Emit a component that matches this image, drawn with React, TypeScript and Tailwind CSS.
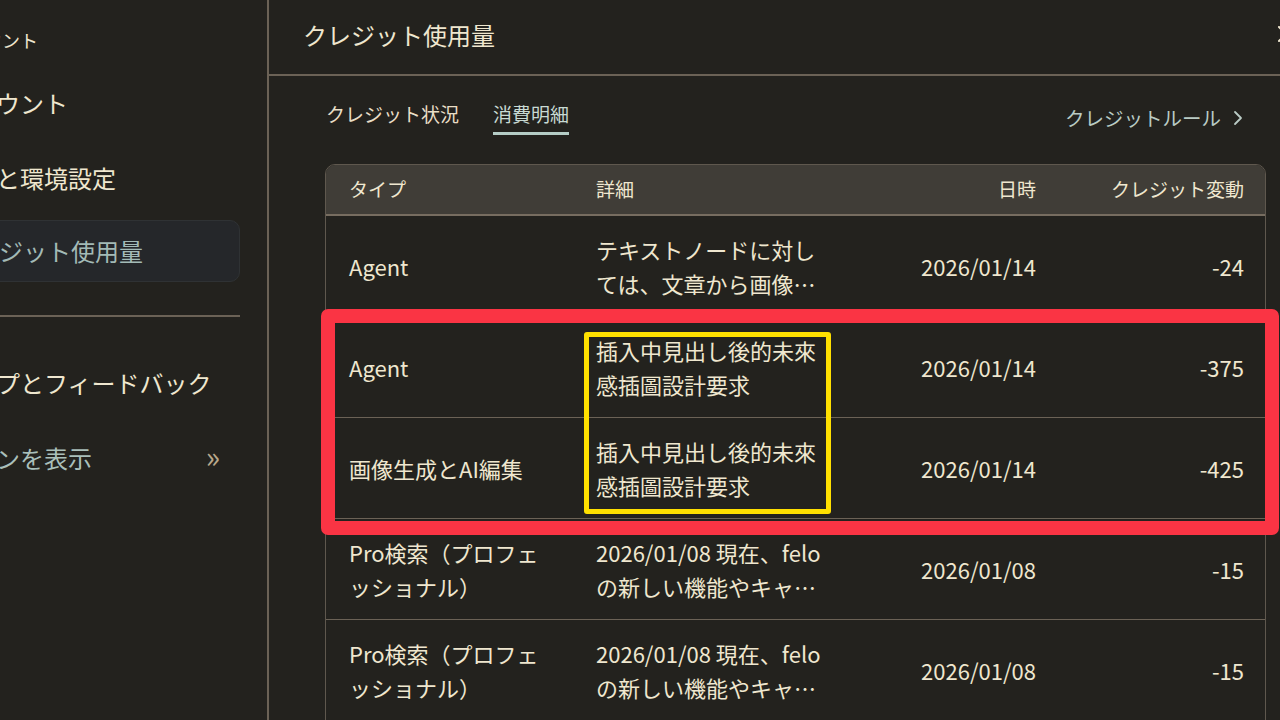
import React from "react";

const cream = "text-[#efe7cf]";

type Row = { type: string[]; detail: string[]; date: string; credit: string };

const rows: Row[] = [
  { type: ["Agent"], detail: ["テキストノードに対し", "ては、文章から画像…"], date: "2026/01/14", credit: "-24" },
  { type: ["Agent"], detail: ["插入中見出し後的未來", "感插圖設計要求"], date: "2026/01/14", credit: "-375" },
  { type: ["画像生成とAI編集"], detail: ["插入中見出し後的未來", "感插圖設計要求"], date: "2026/01/14", credit: "-425" },
  { type: ["Pro検索（プロフェ", "ッショナル）"], detail: ["2026/01/08 現在、felo", "の新しい機能やキャ…"], date: "2026/01/08", credit: "-15" },
  { type: ["Pro検索（プロフェ", "ッショナル）"], detail: ["2026/01/08 現在、felo", "の新しい機能やキャ…"], date: "2026/01/08", credit: "-15" },
  { type: ["Pro検索（プロフェ", "ッショナル）"], detail: ["2026/01/07 現在、felo", "の新しい機能やキャ…"], date: "2026/01/07", credit: "-15" },
];

function Sidebar() {
  return (
    <div className="w-[269px] shrink-0 border-r-2 border-[#6b6256] overflow-hidden h-full">
      <div className="ml-[-68px] w-[308px] flex flex-col">
        <div className={`mt-[24px] pl-[16px] text-[18px] leading-[32px] whitespace-nowrap ${cream}`}>アカウント</div>
        <div className={`mt-[27px] pl-[16px] text-[24px] leading-[40px] whitespace-nowrap ${cream}`}>アカウント</div>
        <div className={`mt-[35px] pl-[16px] text-[24px] leading-[40px] whitespace-nowrap ${cream}`}>言語と環境設定</div>
        <div className="mt-[22px] h-[62px] rounded-[10px] bg-[#25272a] border border-[#2f3234] flex items-center pl-[18px] text-[24px] leading-[40px] whitespace-nowrap text-[#a3bab6]">
          クレジット使用量
        </div>
        <div className="mt-[33px] h-[2px] bg-[#6b6256]" />
        <div className={`mt-[46px] pl-[16px] text-[24px] leading-[40px] whitespace-nowrap ${cream}`}>ヘルプとフィードバック</div>
        <div className="mt-[35px] pl-[16px] pr-[20px] flex items-center justify-between text-[24px] leading-[40px] whitespace-nowrap text-[#a9bfba]">
          <span>プランを表示</span>
          <span className="text-[30px] leading-[30px] mt-[-6px] text-[#b8a88b]">»</span>
        </div>
      </div>
    </div>
  );
}

function Table() {
  return (
    <div className="mt-[29px] rounded-[10px] border border-[#5f584e] overflow-hidden">
      <div className={`h-[51px] bg-[#403d37] border-b-2 border-[#776d60] grid grid-cols-[247px_250px_1fr_208px] items-center pl-[23px] pr-[21px] text-[19px] ${cream}`}>
        <div>タイプ</div>
        <div>詳細</div>
        <div className="text-right">日時</div>
        <div className="text-right">クレジット変動</div>
      </div>
      {rows.map((r, i) => (
        <div
          key={i}
          className={`h-[101px] border-b border-[#6b6256] grid grid-cols-[247px_247px_1fr_208px] items-center pl-[23px] pr-[21px] text-[22px] leading-[34px] ${cream}`}
        >
          <div className="whitespace-nowrap">
            {r.type.map((t, j) => (
              <div key={j}>{t}</div>
            ))}
          </div>
          <div className="whitespace-nowrap">
            {r.detail.map((t, j) => (
              <div key={j}>{t}</div>
            ))}
          </div>
          <div className="text-right">{r.date}</div>
          <div className="text-right">{r.credit}</div>
        </div>
      ))}
    </div>
  );
}

export default function App() {
  return (
    <div
      className="relative w-[1280px] h-[720px] overflow-hidden bg-[#23221e] flex"
      style={{ fontFamily: '"Noto Sans CJK JP", "Noto Sans", sans-serif' }}
    >
      <Sidebar />
      <div className="flex-1 flex flex-col min-w-0">
        <div className="h-[76px] shrink-0 border-b-2 border-[#6b6256] flex pl-[34px]">
          <div className={`self-center text-[24px] leading-[36px] whitespace-nowrap mt-[-4px] ${cream}`}>クレジット使用量</div>
          <div className="ml-auto mr-[-15px] mt-[26px] w-[18px] h-[16px]">
            <svg width="18" height="16" viewBox="0 0 18 16" fill="none" stroke="#efe7cf" strokeWidth="2" strokeLinecap="round">
              <path d="M2 1 L16 15" />
              <path d="M16 1 L2 15" />
            </svg>
          </div>
        </div>
        <div className="pl-[56px] pr-[14px]">
          <div className="mt-[24px] flex items-center justify-between">
            <div className="flex gap-[34px] text-[19px] leading-[28px]">
              <div className="pl-[1px] pb-[4px] border-b-[3px] border-transparent text-[#e9dec6]">クレジット状況</div>
              <div className="pb-[4px] border-b-[3px] border-[#b5cdc6] text-[#c8dad3]">消費明細</div>
            </div>
            <div className="mr-[23px] flex items-center gap-[12px] text-[19.5px] text-[#b9cbc4]">
              <span>クレジットルール</span>
              <svg width="10" height="16" viewBox="0 0 10 16" fill="none" stroke="#b9cbc4" strokeWidth="1.8" strokeLinecap="round" strokeLinejoin="round">
                <path d="M2 2 L8 8 L2 14" />
              </svg>
            </div>
          </div>
          <Table />
        </div>
      </div>
      <div className="absolute left-[321px] top-[309px] w-[958px] h-[226px] border-[14px] border-[#fa3444] rounded-[7px]" />
      <div className="absolute left-[584px] top-[332px] w-[247px] h-[182px] border-[5px] border-[#ffe000] rounded-[3px]" />
    </div>
  );
}
